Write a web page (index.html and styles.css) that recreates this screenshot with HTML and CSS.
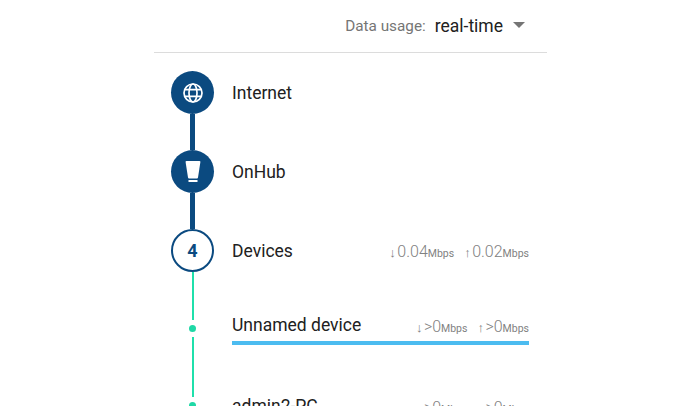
FILE: index.html
```html
<!DOCTYPE html>
<html lang="en">
<head>
    <meta charset="UTF-8">
    <meta name="viewport" content="width=device-width, initial-scale=1.0">
    <title>Data usage</title>
    <link rel="stylesheet" href="styles.css">
</head>
<body>
    <div class="panel">
        <div class="usage-bar">
            <span class="usage-label">Data usage:</span>
            <span class="usage-value">real-time</span>
            <span class="caret"></span>
        </div>

        <div class="row">
            <div class="rail">
                <span class="seg seg-none"></span>
                <span class="node">
                    <svg width="22" height="22" viewBox="0 0 22 22" fill="none" stroke="#fff" stroke-width="1.7">
                        <circle cx="11" cy="11" r="9"/>
                        <ellipse cx="11" cy="11" rx="4" ry="9"/>
                        <path d="M3 7.6h16M3 14.4h16"/>
                    </svg>
                </span>
                <span class="seg seg-dark"></span>
            </div>
            <div class="info"><span class="name">Internet</span></div>
        </div>

        <div class="row">
            <div class="rail">
                <span class="seg seg-dark"></span>
                <span class="node">
                    <svg width="22" height="28" viewBox="0 0 22 28" fill="#fff">
                        <path d="M4.500 3h13q1 0 .9 1l-2.400 15.500q-.2 .9-1 .9h-8q-.8 0-1-.9l-2.400-15.500q-.1-1 .9-1z"/>
                        <rect x="6.500" y="22" width="9" height="2"/>
                    </svg>
                </span>
                <span class="seg seg-dark"></span>
            </div>
            <div class="info"><span class="name">OnHub</span></div>
        </div>

        <div class="row">
            <div class="rail">
                <span class="seg seg-dark"></span>
                <span class="node node-count">4</span>
                <span class="seg seg-green"></span>
            </div>
            <div class="info">
                <span class="name">Devices</span>
                <div class="speeds">
                    <span class="speed">↓<b>0.04</b><small>Mbps</small></span>
                    <span class="speed">↑<b>0.02</b><small>Mbps</small></span>
                </div>
            </div>
        </div>

        <div class="row row-device">
            <div class="rail">
                <span class="seg seg-green"></span>
                <span class="dot"></span>
                <span class="seg seg-green"></span>
            </div>
            <div class="info info-active">
                <span class="name">Unnamed device</span>
                <div class="speeds">
                    <span class="speed">↓<b>&gt;0</b><small>Mbps</small></span>
                    <span class="speed">↑<b>&gt;0</b><small>Mbps</small></span>
                </div>
            </div>
        </div>

        <div class="row row-device">
            <div class="rail">
                <span class="seg seg-green"></span>
                <span class="dot"></span>
                <span class="seg seg-green"></span>
            </div>
            <div class="info">
                <span class="name">admin2-PC</span>
                <div class="speeds">
                    <span class="speed">↓<b>&gt;0</b><small>Mbps</small></span>
                    <span class="speed">↑<b>&gt;0</b><small>Mbps</small></span>
                </div>
            </div>
        </div>
    </div>
</body>
</html>
```

FILE: styles.css
```css
* {
    padding: 0;
    margin: 0;
    box-sizing: border-box;
}
html, body {
    height: 406px;
    overflow: hidden;
}
body {
    background: #fff;
    font-family: Roboto, "Liberation Sans", sans-serif;
    color: #212121;
}
.panel {
    width: 393px;
    margin-left: 154px;
}
.usage-bar {
    height: 53px;
    display: flex;
    align-items: center;
    justify-content: flex-end;
    padding-right: 22px;
    border-bottom: 1px solid #dcdcdc;
}
.usage-label {
    font-size: 15.300px;
    color: #757575;
    margin-right: 9px;
}
.usage-value {
    font-size: 17.500px;
}
.caret {
    width: 0;
    height: 0;
    margin-left: 10px;
    margin-bottom: 3px;
    border-left: 6px solid transparent;
    border-right: 6px solid transparent;
    border-top: 6px solid #757575;
}
.row {
    height: 79px;
    display: flex;
    padding-left: 17px;
}
.row-device {
    height: 77px;
}
.rail {
    width: 43px;
    flex: none;
    display: flex;
    flex-direction: column;
    align-items: center;
}
.seg {
    flex: 1;
}
.seg-dark {
    width: 5px;
    background: #0b4a80;
}
.seg-green {
    width: 2px;
    background: #1fe0ab;
}
.seg-none {
    width: 5px;
}
.node {
    width: 43px;
    height: 43px;
    flex: none;
    border-radius: 50%;
    background: #0b4a80;
    display: flex;
    align-items: center;
    justify-content: center;
}
.node-count {
    background: #fff;
    border: 2px solid #0b4a80;
    color: #0b4a80;
    font-size: 18px;
    font-weight: 700;
}
.dot {
    width: 7px;
    height: 7px;
    flex: none;
    margin: 5px 0;
    border-radius: 50%;
    background: #1fd8a6;
}
.info {
    flex: 1;
    margin-left: 18px;
    margin-right: 18px;
    display: flex;
    align-items: center;
    justify-content: space-between;
}
.row-device .info {
    align-items: flex-end;
    height: 55px;
    padding-bottom: 6px;
}
.info-active {
    border-bottom: 4px solid #4cbcf0;
}
.name {
    font-size: 17.500px;
}
.speeds {
    display: flex;
    gap: 10px;
    margin-top: 2px;
    color: #808080;
    font-size: 13px;
    opacity: .99;
}
.row-device .speeds {
    margin-bottom: -1px;
}
.speed b {
    font-weight: 300;
    font-size: 16px;
    margin-left: 1.500px;
}
.speed small {
    font-size: 10.500px;
}
```
